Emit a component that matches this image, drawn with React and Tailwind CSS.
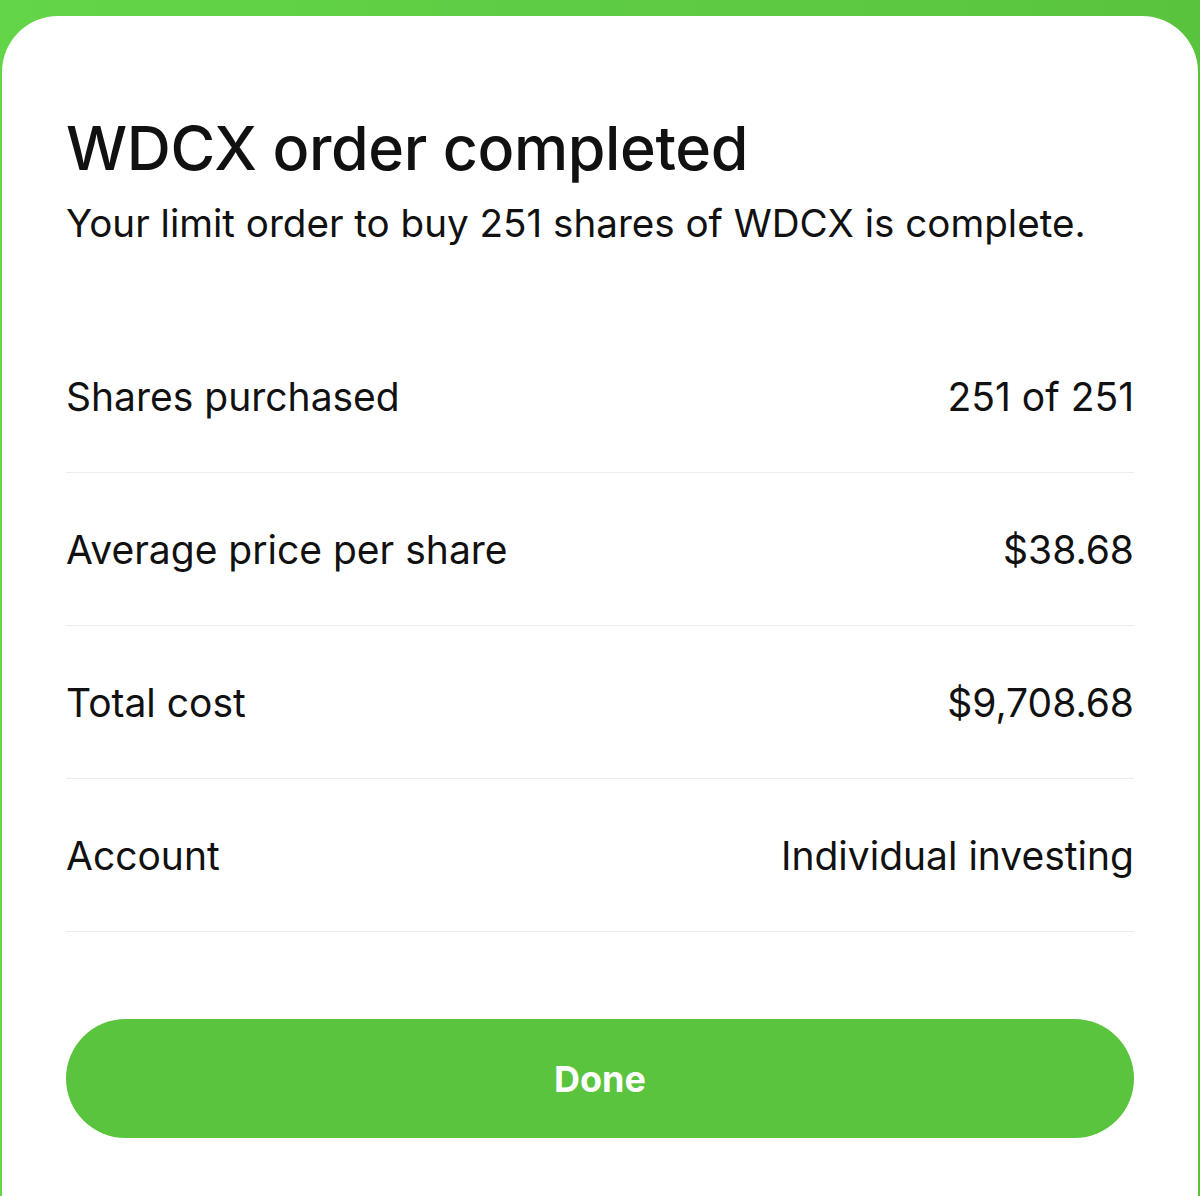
const rows = [
  { label: 'Shares purchased', value: '251 of 251' },
  { label: 'Average price per share', value: '$38.68' },
  { label: 'Total cost', value: '$9,708.68' },
  { label: 'Account', value: 'Individual investing' },
]

export default function App() {
  return (
    <div
      className="h-[1196px] w-[1200px] overflow-hidden bg-gradient-to-r from-[#63d548] to-[#5ac33e] pt-[16px] px-[2px]"
      style={{ fontFamily: 'Inter, "Noto Sans", sans-serif' }}
    >
      <div className="h-full rounded-t-[56px] bg-white px-[64px] pt-[96px] text-[#111]">
        <h1 className="text-[61px] font-medium leading-[1.21] tracking-[-0.4px]">WDCX order completed</h1>
        <p className="mt-[14px] text-[38.6px] leading-[1.21]">
          Your limit order to buy 251 shares of WDCX is complete.
        </p>

        <div className="mt-[74px]">
          {rows.map(r => (
            <div
              key={r.label}
              className="flex h-[153px] items-center justify-between border-b border-[#ececec] text-[39px] leading-[1.21]"
            >
              <span>{r.label}</span>
              <span>{r.value}</span>
            </div>
          ))}
        </div>

        <button className="mt-[87px] flex h-[119px] w-full items-center justify-center rounded-full bg-[#5bc43e] text-[36px] font-bold text-white">
          Done
        </button>
      </div>
    </div>
  )
}
